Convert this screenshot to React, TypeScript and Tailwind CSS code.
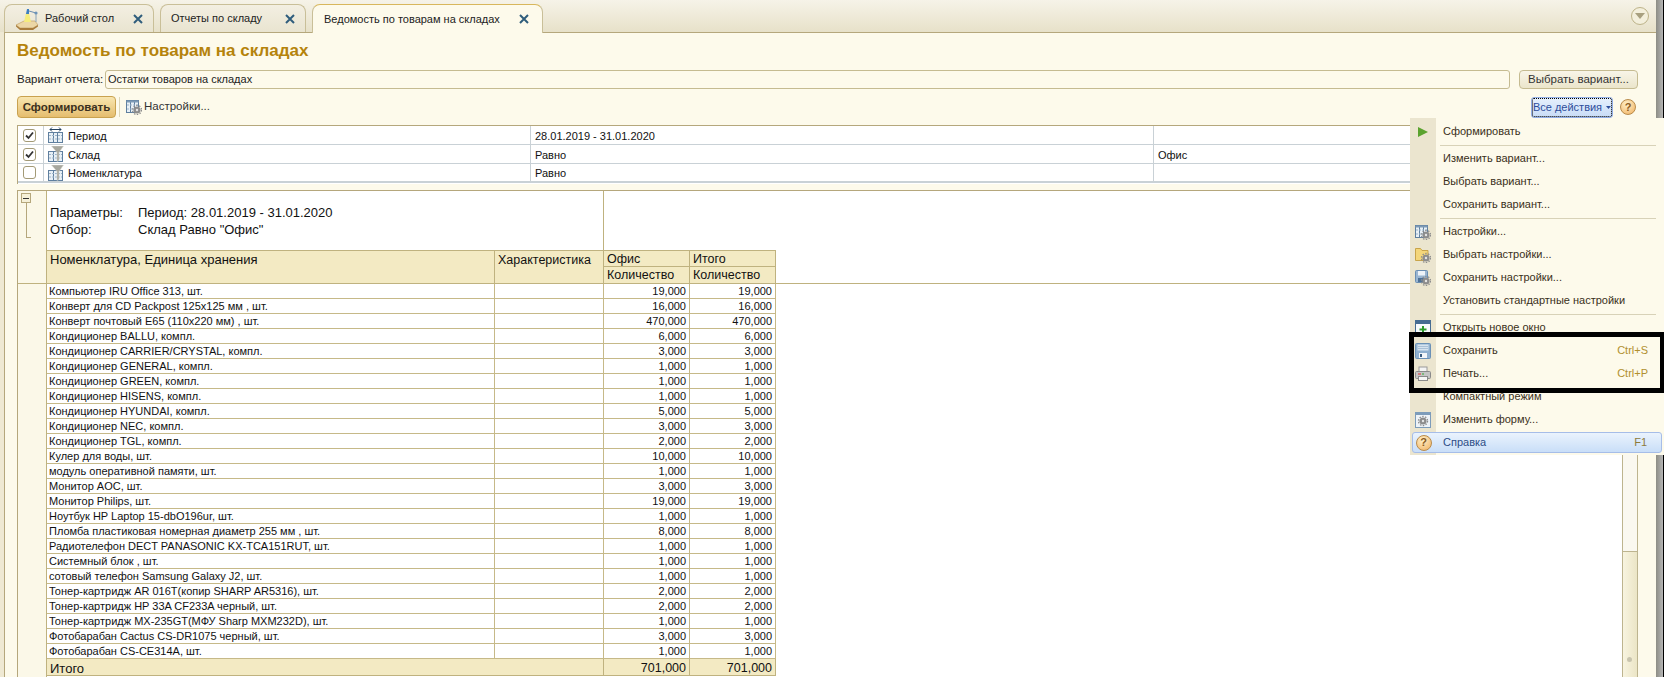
import React from "react";

const rows: [string, string][] = [
  ["Компьютер IRU Office 313, шт.", "19,000"],
  ["Конверт для CD Packpost 125x125 мм , шт.", "16,000"],
  ["Конверт почтовый E65 (110x220 мм) , шт.", "470,000"],
  ["Кондиционер BALLU, компл.", "6,000"],
  ["Кондиционер CARRIER/CRYSTAL, компл.", "3,000"],
  ["Кондиционер GENERAL, компл.", "1,000"],
  ["Кондиционер GREEN, компл.", "1,000"],
  ["Кондиционер HISENS, компл.", "1,000"],
  ["Кондиционер HYUNDAI, компл.", "5,000"],
  ["Кондиционер NEC, компл.", "3,000"],
  ["Кондиционер TGL, компл.", "2,000"],
  ["Кулер для воды, шт.", "10,000"],
  ["модуль оперативной памяти, шт.", "1,000"],
  ["Монитор AOC, шт.", "3,000"],
  ["Монитор Philips, шт.", "19,000"],
  ["Ноутбук HP Laptop 15-dbO196ur, шт.", "1,000"],
  ["Пломба пластиковая номерная диаметр 255 мм , шт.", "8,000"],
  ["Радиотелефон DECT PANASONIC KX-TCA151RUT, шт.", "1,000"],
  ["Системный блок , шт.", "1,000"],
  ["сотовый телефон Samsung Galaxy J2, шт.", "1,000"],
  ["Тонер-картридж AR 016T(копир SHARP AR5316), шт.", "2,000"],
  ["Тонер-картридж HP 33A CF233A черный, шт.", "2,000"],
  ["Тонер-картридж MX-235GT(МФУ Sharp MXM232D), шт.", "1,000"],
  ["Фотобарабан Cactus CS-DR1075 черный, шт.", "3,000"],
  ["Фотобарабан CS-CE314A, шт.", "1,000"],
];

function CloseX() {
  return (
    <svg width="10" height="10" viewBox="0 0 10 10" className="shrink-0">
      <path d="M1 1l8 8M9 1l-8 8" stroke="#2f5d7c" strokeWidth="2" />
    </svg>
  );
}

function DeskIcon() {
  return (
    <svg width="24" height="24" viewBox="0 0 24 24" className="shrink-0">
      <path d="M1 18l8-4h11l3 4-5 3H5z" fill="#ecd7a6" stroke="#c3a268" strokeWidth="0.7" />
      <path d="M1 18l4 3h13l5-3v1.500L18 23H5l-4-3.500z" fill="#a87c3c" />
      <path d="M9 15l2-9h3l2 9z" fill="#f5ec7c" />
      <path d="M11 7l1-5 2 0 0 5z" fill="#3d7fc0" />
      <path d="M14 4l7 2" stroke="#6b8db0" strokeWidth="1" />
      <circle cx="21" cy="6" r="1.600" fill="#6c93b8" />
      <path d="M21 7v8" stroke="#8aa3b8" strokeWidth="1" />
    </svg>
  );
}

function GridBase() {
  return (
    <g>
      <rect x="0.500" y="5.500" width="14" height="10" fill="#e8f0f6" stroke="#5f7f9f" />
      <path d="M5.500 5.500v10M9.500 5.500v10" stroke="#5f7f9f" />
      <path d="M1 8.500h13M1 12h13" stroke="#9db4c9" strokeDasharray="2 1" />
    </g>
  );
}

function PeriodIcon() {
  return (
    <svg width="16" height="16" viewBox="0 0 16 16" className="shrink-0">
      <GridBase />
      <path d="M2 2.500h11M2 2.500l2-2M2 2.500l2 2M13 2.500l-2-2M13 2.500l-2 2" stroke="#26425e" fill="none" />
    </svg>
  );
}

function FilterIcon() {
  return (
    <svg width="16" height="16" viewBox="0 0 16 16" className="shrink-0">
      <GridBase />
      <path d="M3.500 0h12l-4.500 6.500v8L9 15.500V6.500z" fill="#a7a79e" stroke="#d8d8d0" strokeWidth="0.500" />
    </svg>
  );
}

function GearDot({ x = 11, y = 11 }: { x?: number; y?: number }) {
  return (
    <g>
      <circle cx={x} cy={y} r="3.600" fill="#8d8d8d" />
      <circle cx={x} cy={y} r="4.600" fill="none" stroke="#8d8d8d" strokeWidth="1.200" strokeDasharray="1.500 1.400" />
      <circle cx={x} cy={y} r="1.200" fill="#e6e6e6" />
    </g>
  );
}

function SettingsIcon() {
  return (
    <svg width="16" height="16" viewBox="0 0 16 16" className="shrink-0">
      <rect x="0.500" y="1.500" width="12" height="12" fill="#e8f0f6" stroke="#5f7f9f" />
      <path d="M4.500 1.500v12M8.500 1.500v12" stroke="#5f7f9f" />
      <path d="M1 6h11M1 10h11" stroke="#9db4c9" strokeDasharray="2 1" />
      <rect x="0.500" y="1.500" width="12" height="2" fill="#7d9ab6" />
      <GearDot />
    </svg>
  );
}

function FolderGearIcon() {
  return (
    <svg width="16" height="16" viewBox="0 0 16 16" className="shrink-0">
      <path d="M0.500 1.500h5l1.500 2h6v10h-12.500z" fill="#f4d67a" stroke="#c9a44a" />
      <GearDot />
    </svg>
  );
}

function SaveGearIcon() {
  return (
    <svg width="16" height="16" viewBox="0 0 16 16" className="shrink-0">
      <rect x="0.500" y="0.500" width="12" height="12" rx="1" fill="#9ab6d2" stroke="#6b8fb3" />
      <rect x="3" y="1" width="7" height="4.500" fill="#eef3f8" />
      <rect x="3" y="8" width="6" height="4" fill="#4e7196" />
      <GearDot />
    </svg>
  );
}

function FloppyIcon() {
  return (
    <svg width="16" height="16" viewBox="0 0 16 16" className="shrink-0">
      <rect x="0.500" y="0.500" width="15" height="15" rx="1" fill="#8fb0cf" stroke="#6b91b6" />
      <rect x="2.500" y="1.500" width="11" height="6" fill="#d6e3ef" />
      <path d="M3 3.500h10M3 5.500h10" stroke="#a9c0d6" />
      <rect x="4" y="10" width="8" height="5" fill="#f3f6f9" />
      <rect x="5" y="11" width="2" height="3" fill="#3a5d80" />
    </svg>
  );
}

function PrinterIcon() {
  return (
    <svg width="16" height="16" viewBox="0 0 16 16" className="shrink-0">
      <rect x="4" y="1" width="8" height="5" fill="#f4f4f4" stroke="#9a9a9a" />
      <rect x="0.500" y="5.500" width="15" height="7" rx="1" fill="#c4c4c4" stroke="#8a8a8a" />
      <path d="M3 8h3" stroke="#d33" />
      <path d="M7 8h2" stroke="#3a3" />
      <rect x="3.500" y="10.500" width="9" height="4" fill="#f6f6f6" stroke="#8a8a8a" />
    </svg>
  );
}

function WindowPlusIcon() {
  return (
    <svg width="16" height="16" viewBox="0 0 16 16" className="shrink-0">
      <rect x="0.500" y="0.500" width="15" height="15" fill="#f8fbfd" stroke="#466c92" />
      <rect x="1" y="1" width="14" height="3" fill="#466c92" />
      <path d="M8 6v7M4.500 9.500h7" stroke="#2c9a2c" strokeWidth="2" />
    </svg>
  );
}

function FormIcon() {
  return (
    <svg width="16" height="16" viewBox="0 0 16 16" className="shrink-0">
      <rect x="0.500" y="0.500" width="15" height="15" fill="#eef3f8" stroke="#7d9cba" />
      <rect x="1" y="1" width="14" height="2" fill="#7d9cba" />
      <GearDot x={8} y={9} />
    </svg>
  );
}

function HelpIcon({ size = 16 }: { size?: number }) {
  return (
    <span
      className="flex shrink-0 items-center justify-center rounded-full border border-[#b98b4a] bg-[radial-gradient(circle_at_40%_30%,#fff0c8,#f0b060)] font-bold text-[#8a5a1e]"
      style={{ width: size, height: size, fontSize: size - 5 }}
    >
      ?
    </span>
  );
}

function Play() {
  return (
    <svg width="12" height="12" viewBox="0 0 12 12" className="shrink-0">
      <path d="M1 1l10 5-10 5z" fill="#5ba32f" />
    </svg>
  );
}

function Checkbox({ checked }: { checked?: boolean }) {
  return (
    <span className="flex size-[13px] items-center justify-center rounded-[3px] border border-[#a39a76] bg-white">
      {checked && (
        <svg width="9" height="9" viewBox="0 0 9 9">
          <path d="M1 4.500l2.500 2.500L8 1.500" stroke="#333" strokeWidth="1.800" fill="none" />
        </svg>
      )}
    </span>
  );
}

function Tab({
  label,
  width,
  active,
  icon,
}: {
  label: string;
  width: string;
  active?: boolean;
  icon?: React.ReactNode;
}) {
  return (
    <div
      className={`flex items-center rounded-t-[8px] border border-b-0 border-[#c9bf98] text-[11px] text-[#222] ${width} ${
        active
          ? "relative z-10 mb-[-1px] h-[29px] border-[#b5a77c] border-t-[#d8b75c] bg-[#fdfaeb] pl-[11px] pr-[13px]"
          : "h-[28px] bg-[linear-gradient(#f3efe2,#e9e4d0)] pl-[10px] pr-[10px]"
      }`}
    >
      {icon}
      <span className="flex-1 truncate">{label}</span>
      <CloseX />
    </div>
  );
}

function FilterRow({
  checked,
  icon,
  name,
  cond,
  value,
  last,
}: {
  checked?: boolean;
  icon: React.ReactNode;
  name: string;
  cond: string;
  value?: string;
  last?: boolean;
}) {
  const line = last ? "border-b-2 border-[#c9d1d6]" : "border-b border-[#c9d1d6]";
  return (
    <div className={`flex h-[19px] items-center text-[11px] text-[#111] ${line}`}>
      <div className="flex h-full w-[26px] items-center justify-center border-r border-[#c9d1d6] pr-[2px]">
        <Checkbox checked={checked} />
      </div>
      <div className="flex h-full w-[487px] items-center gap-[4px] border-r border-[#c9d1d6] pl-[4px]">
        {icon}
        <span className="pt-[2px]">{name}</span>
      </div>
      <div className="flex h-full w-[623px] items-center border-r border-[#c9d1d6] pl-[4px] pt-[2px]">{cond}</div>
      <div className="flex h-full flex-1 items-center pl-[4px] pt-[2px]">{value}</div>
    </div>
  );
}

function MenuItem({
  icon,
  label,
  shortcut,
}: {
  icon?: React.ReactNode;
  label: string;
  shortcut?: string;
}) {
  return (
    <div className="flex h-[23px] items-center text-[11px] text-[#3a3020]">
      <div className="flex h-full w-[26px] shrink-0 items-center justify-center">{icon}</div>
      <span className="flex-1 pl-[7px]">{label}</span>
      {shortcut && <span className="pr-[16px] text-[#b1902f]">{shortcut}</span>}
    </div>
  );
}

function MenuSep() {
  return (
    <div className="flex h-[4px] items-center">
      <div className="h-full w-[26px] shrink-0" />
      <div className="ml-[4px] mr-[8px] h-px flex-1 bg-[#d8d2b8]" />
    </div>
  );
}

function ActionsMenu() {
  return (
    <div className="absolute left-[1410px] top-[118px] z-20 h-[337px] w-[254px] bg-[linear-gradient(90deg,#ebe5cf_26px,#fdfaeb_26px)] pt-[2px]">
      <MenuItem icon={<Play />} label="Сформировать" />
      <MenuSep />
      <MenuItem label="Изменить вариант..." />
      <MenuItem label="Выбрать вариант..." />
      <MenuItem label="Сохранить вариант..." />
      <MenuSep />
      <MenuItem icon={<SettingsIcon />} label="Настройки..." />
      <MenuItem icon={<FolderGearIcon />} label="Выбрать настройки..." />
      <MenuItem icon={<SaveGearIcon />} label="Сохранить настройки..." />
      <MenuItem label="Установить стандартные настройки" />
      <MenuSep />
      <MenuItem icon={<WindowPlusIcon />} label="Открыть новое окно" />
      <MenuItem icon={<FloppyIcon />} label="Сохранить" shortcut="Ctrl+S" />
      <MenuItem icon={<PrinterIcon />} label="Печать..." shortcut="Ctrl+P" />
      <MenuItem label="Компактный режим" />
      <MenuItem icon={<FormIcon />} label="Изменить форму..." />
      <div className="relative flex h-[23px] items-center text-[11px] text-[#2d4d86]">
        <div className="absolute inset-x-[2px] inset-y-[1px] rounded-[3px] border border-[#a6bde8] bg-[linear-gradient(#eaf3fd,#c9def8)]" />
        <div className="relative flex w-[26px] justify-center pl-[1px]">
          <HelpIcon />
        </div>
        <span className="relative flex-1 pl-[7px]">Справка</span>
        <span className="relative pr-[17px] text-[#8d7a3a]">F1</span>
      </div>
    </div>
  );
}

export default function App() {
  return (
    <div className="relative flex h-[677px] w-[1664px] overflow-hidden bg-[#efe9d3] font-['Liberation_Sans',Arial,sans-serif]">
      <div className="flex min-w-0 flex-1 flex-col">
        {/* tab strip */}
        <div className="flex h-[32px] shrink-0 items-end gap-[6px] bg-[linear-gradient(#f6f3e8,#e7e1c9)] pl-[4px] pr-[7px]">
          <Tab
            label="Рабочий стол"
            width="w-[150px]"
            icon={
              <span className="mr-[6px]">
                <DeskIcon />
              </span>
            }
          />
          <Tab label="Отчеты по складу" width="w-[146px]" />
          <Tab label="Ведомость по товарам на складах" width="w-[231px]" active />
          <div className="ml-auto flex h-full items-center">
            <span className="flex size-[18px] items-center justify-center rounded-full border border-[#bdb389] bg-[#f3efdc]">
              <svg width="10" height="6" viewBox="0 0 10 6">
                <path d="M0 0h10l-5 6z" fill="#a8a080" />
              </svg>
            </span>
          </div>
        </div>

        {/* form */}
        <div className="ml-[4px] flex min-h-0 flex-1 flex-col border-l border-t border-[#b5a77c] bg-[#fdfaeb] pl-[12px] pr-[18px]">
          <div className="flex h-[37px] shrink-0 items-center pb-[2px] text-[17px] font-bold leading-none text-[#b5830c]">
            Ведомость по товарам на складах
          </div>

          <div className="flex h-[19px] shrink-0 items-center text-[11px] text-[#222]">
            <span className="w-[88px] shrink-0 text-[11.5px]">Вариант отчета:</span>
            <div className="flex h-full flex-1 items-center rounded-[3px] border border-[#c5bb91] bg-[#fdfaeb] pl-[2px]">
              Остатки товаров на складах
            </div>
            <button className="ml-[9px] h-full w-[119px] rounded-[4px] border border-[#c5bb91] bg-[linear-gradient(#f8f5e8,#ebe5cb)] text-[11.5px] text-[#333]">
              Выбрать вариант...
            </button>
          </div>

          <div className="mt-[7px] flex h-[22px] shrink-0 items-center text-[11px] text-[#333]">
            <button className="h-[22px] w-[99px] rounded-[4px] border border-[#c9a24f] bg-[linear-gradient(#f8e6b0,#e5bd6e)] pt-[1px] text-[11.5px] font-bold text-[#3a3020]">
              Сформировать
            </button>
            <span className="ml-[3px] h-[20px] w-px bg-[#ddd6b8]" />
            <span className="ml-[6px] flex items-center gap-[2px] text-[11.5px]">
              <SettingsIcon />
              Настройки...
            </span>
            <div className="ml-auto flex items-center gap-[7px] pr-[2px]">
              <button className="flex h-[21px] w-[82px] items-center justify-center gap-[4px] rounded-[3px] border border-[#93aee6] bg-[linear-gradient(#e6f0fc,#c8dcf7)] text-[#2d4d9a] outline-1 -outline-offset-2 outline-dotted outline-black">
                Все действия
                <svg width="5" height="3" viewBox="0 0 5 3">
                  <path d="M0 0h5L2.500 3z" fill="#2d4d9a" />
                </svg>
              </button>
              <HelpIcon />
            </div>
          </div>

          {/* filter table */}
          <div className="mt-[7px] h-[59px] shrink-0 border-l border-t border-[#b5a77c] bg-white">
            <FilterRow checked icon={<PeriodIcon />} name="Период" cond="28.01.2019 - 31.01.2020" />
            <FilterRow checked icon={<FilterIcon />} name="Склад" cond="Равно" value="Офис" />
            <FilterRow icon={<FilterIcon />} name="Номенклатура" cond="Равно" last />
          </div>

          {/* report */}
          <div className="mt-[6px] flex min-h-0 flex-1 border-l border-t border-[#b5a77c]">
            <div className="flex min-w-0 flex-1 bg-white">
              <div className="w-[29px] shrink-0 border-r border-[#bfb27f] bg-[#fbf8e8]">
                <div className="h-[93px] border-b border-[#bfb27f] pl-[3px] pt-[2px]">
                  <span className="flex h-[10px] w-[10px] items-center justify-center border border-[#b5a77c] bg-[#f5f0d8]">
                    <span className="h-px w-[6px] bg-[#333]" />
                  </span>
                  <span className="ml-[5px] block h-[35px] w-[5px] border-b border-l border-[#b5a77c]" />
                </div>
              </div>
              <div className="min-w-0 flex-1 text-[#111]">
                <div className="flex h-[59px]">
                  <div className="w-[557px] border-r border-[#bfb27f] pl-[3px] pt-[13px] text-[13px] leading-[17px]">
                    <div className="flex">
                      <span className="w-[88px]">Параметры:</span>
                      <span>Период: 28.01.2019 - 31.01.2020</span>
                    </div>
                    <div className="flex">
                      <span className="w-[88px]">Отбор:</span>
                      <span>Склад Равно "Офис"</span>
                    </div>
                  </div>
                </div>
                <div className="flex h-[34px] border-b border-[#bfb27f] text-[12.5px] leading-[16px]">
                  <div className="w-[448px] border-t border-r border-[#bfb27f] bg-[#f3eac3] pl-[3px] pt-[1px] text-[13px]">
                    Номенклатура, Единица хранения
                  </div>
                  <div className="w-[109px] border-t border-r border-[#bfb27f] bg-[#f3eac3] pl-[3px] pt-[1px]">
                    Характеристика
                  </div>
                  {["Офис", "Итого"].map((name) => (
                    <div key={name} className="w-[86px] border-r border-[#bfb27f] bg-[#f3eac3]">
                      <div className="h-[17px] border-y border-[#bfb27f] pl-[3px]">{name}</div>
                      <div className="pl-[3px]">Количество</div>
                    </div>
                  ))}
                </div>
                {rows.map(([name, qty]) => (
                  <div key={name} className="flex h-[15px] w-[729px] border-b border-[#c6b988] text-[11px] leading-[15px]">
                    <div className="w-[448px] truncate border-r border-[#c6b988] pl-[2px]">{name}</div>
                    <div className="w-[109px] border-r border-[#c6b988]" />
                    <div className="w-[86px] border-r border-[#c6b988] pr-[3px] text-right">{qty}</div>
                    <div className="w-[86px] border-r border-[#c6b988] pr-[3px] text-right">{qty}</div>
                  </div>
                ))}
                <div className="flex h-[17px] w-[729px] border-b border-[#bfb27f] bg-[#f3eac3] text-[12.5px] leading-[19px]">
                  <div className="w-[557px] border-r border-[#bfb27f] pl-[3px] text-[13px]">Итого</div>
                  <div className="w-[86px] border-r border-[#bfb27f] pr-[3px] text-right">701,000</div>
                  <div className="w-[86px] border-r border-[#bfb27f] pr-[3px] text-right">701,000</div>
                </div>
              </div>
            </div>
            <div className="flex w-[16px] shrink-0 flex-col border-x border-[#bdb48f] bg-[#faf8f0]">
              <div className="flex-1" />
              <div className="relative h-[126px] border-t border-[#bdb48f] bg-[linear-gradient(90deg,#f8f4e0,#ebe5c6)]">
                <span className="absolute left-[4px] top-[105px] size-[5px] rounded-full bg-[#c8c4ae]" />
              </div>
            </div>
          </div>
        </div>
      </div>
      <div className="w-[7px] shrink-0 bg-[linear-gradient(90deg,#8d8d85,#b5b5b5)]" />
      <div className="w-px shrink-0 bg-black" />

      <ActionsMenu />
      {/* highlight drawn on the screenshot */}
      <div className="pointer-events-none absolute left-[1409px] top-[332px] z-30 h-[61px] w-[255px] border-[5px] border-r-[4px] border-black" />
    </div>
  );
}
